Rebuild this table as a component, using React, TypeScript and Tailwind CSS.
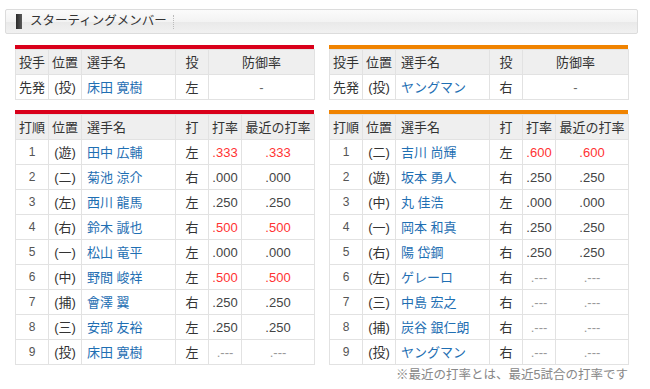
import React from "react";

type Row = { n: string; pos: string; name: string; hand: string; avg: string; recent: string; hot?: boolean };

const left: Row[] = [
  { n: "1", pos: "遊", name: "田中 広輔", hand: "左", avg: ".333", recent: ".333", hot: true },
  { n: "2", pos: "二", name: "菊池 涼介", hand: "右", avg: ".000", recent: ".000" },
  { n: "3", pos: "左", name: "西川 龍馬", hand: "左", avg: ".250", recent: ".250" },
  { n: "4", pos: "右", name: "鈴木 誠也", hand: "右", avg: ".500", recent: ".500", hot: true },
  { n: "5", pos: "一", name: "松山 竜平", hand: "左", avg: ".000", recent: ".000" },
  { n: "6", pos: "中", name: "野間 峻祥", hand: "左", avg: ".500", recent: ".500", hot: true },
  { n: "7", pos: "捕", name: "會澤 翼", hand: "右", avg: ".250", recent: ".250" },
  { n: "8", pos: "三", name: "安部 友裕", hand: "左", avg: ".250", recent: ".250" },
  { n: "9", pos: "投", name: "床田 寛樹", hand: "左", avg: ".---", recent: ".---" },
];

const right: Row[] = [
  { n: "1", pos: "二", name: "吉川 尚輝", hand: "左", avg: ".600", recent: ".600", hot: true },
  { n: "2", pos: "遊", name: "坂本 勇人", hand: "右", avg: ".250", recent: ".250" },
  { n: "3", pos: "中", name: "丸 佳浩", hand: "左", avg: ".000", recent: ".000" },
  { n: "4", pos: "一", name: "岡本 和真", hand: "右", avg: ".250", recent: ".250" },
  { n: "5", pos: "右", name: "陽 岱鋼", hand: "右", avg: ".250", recent: ".250" },
  { n: "6", pos: "左", name: "ゲレーロ", hand: "右", avg: ".---", recent: ".---" },
  { n: "7", pos: "三", name: "中島 宏之", hand: "右", avg: ".---", recent: ".---" },
  { n: "8", pos: "捕", name: "炭谷 銀仁朗", hand: "右", avg: ".---", recent: ".---" },
  { n: "9", pos: "投", name: "ヤングマン", hand: "右", avg: ".---", recent: ".---" },
];

const th = "h-[25px] p-0 border border-[#e2e2e2] bg-[#efefef] text-[#333] font-normal text-center leading-none";
const td = "h-[25px] p-0 border border-[#e2e2e2] bg-white text-[#333] text-center leading-none";

function Pitcher({ color, name, hand }: { color: string; name: string; hand: string }) {
  return (
    <div className="w-[299px]">
      <div className={color + " h-[4px]"} />
      <table className="w-[299px] table-fixed border-collapse">
        <colgroup>
          <col className="w-[33px]" />
          <col className="w-[33px]" />
          <col className="w-[94px]" />
          <col className="w-[33px]" />
          <col className="w-[106px]" />
        </colgroup>
        <thead>
          <tr>
            <th className={th}>投手</th>
            <th className={th}>位置</th>
            <th className={th + " !text-left pl-[5px]"}>選手名</th>
            <th className={th}>投</th>
            <th className={th}>防御率</th>
          </tr>
        </thead>
        <tbody>
          <tr>
            <td className={td}>先発</td>
            <td className={td}>(投)</td>
            <td className={td + " !text-left pl-[5px] !text-[#1f6fb3]"}>{name}</td>
            <td className={td}>{hand}</td>
            <td className={td + " !text-[#666]"}>-</td>
          </tr>
        </tbody>
      </table>
    </div>
  );
}

function Lineup({ color, rows }: { color: string; rows: Row[] }) {
  return (
    <div className="w-[299px]">
      <div className={color + " h-[4px]"} />
      <table className="w-[299px] table-fixed border-collapse">
        <colgroup>
          <col className="w-[33px]" />
          <col className="w-[33px]" />
          <col className="w-[94px]" />
          <col className="w-[33px]" />
          <col className="w-[33px]" />
          <col className="w-[73px]" />
        </colgroup>
        <thead>
          <tr>
            <th className={th}>打順</th>
            <th className={th}>位置</th>
            <th className={th + " !text-left pl-[5px]"}>選手名</th>
            <th className={th}>打</th>
            <th className={th}>打率</th>
            <th className={th}>最近の打率</th>
          </tr>
        </thead>
        <tbody>
          {rows.map((r) => {
            const numCls = r.hot ? " !text-[#ff3333]" : r.avg === ".---" ? " !text-[#999]" : " !text-[#444]";
            return (
              <tr key={r.n}>
                <td className={td + " !text-[#555] text-[12px]"}>{r.n}</td>
                <td className={td}>({r.pos})</td>
                <td className={td + " !text-left pl-[5px] !text-[#1f6fb3]"}>{r.name}</td>
                <td className={td}>{r.hand}</td>
                <td className={td + numCls}>{r.avg}</td>
                <td className={td + numCls}>{r.recent}</td>
              </tr>
            );
          })}
        </tbody>
      </table>
    </div>
  );
}

export default function App() {
  return (
    <div className="w-[650px] h-[389px] bg-white font-[family-name:'Liberation_Sans','Noto_Sans_CJK_JP',sans-serif] text-[13px] overflow-hidden">
      <div className="ml-[5px] w-[633px] pt-[9px]">
        <div className="h-[25px] flex items-center rounded-[2px] border border-[#dcdcdc] bg-[linear-gradient(#fbfbfb,#f3f3f3_50%,#e9e9e9_52%,#f1f1f1)]">
          <div className="ml-[10px] w-[6px] h-[15px] bg-[linear-gradient(90deg,#2a2a2a,#5a5a5a)]" />
          <div className="ml-[8px] text-[12.5px] text-[#333] leading-none">スターティングメンバー</div>
          <div className="ml-[6px] h-[14px] border-l border-dotted border-[#bbb]" />
        </div>
        <div className="px-[10px] pt-[11px]">
          <div className="flex gap-[15px]">
            <Pitcher color="bg-[#d9001a]" name="床田 寛樹" hand="左" />
            <Pitcher color="bg-[#f08300]" name="ヤングマン" hand="右" />
          </div>
          <div className="flex gap-[15px] mt-[10px]">
            <Lineup color="bg-[#d9001a]" rows={left} />
            <Lineup color="bg-[#f08300]" rows={right} />
          </div>
          <div className="mt-[4px] text-right text-[12.5px] text-[#888] leading-none">※最近の打率とは、最近5試合の打率です</div>
        </div>
      </div>
    </div>
  );
}
